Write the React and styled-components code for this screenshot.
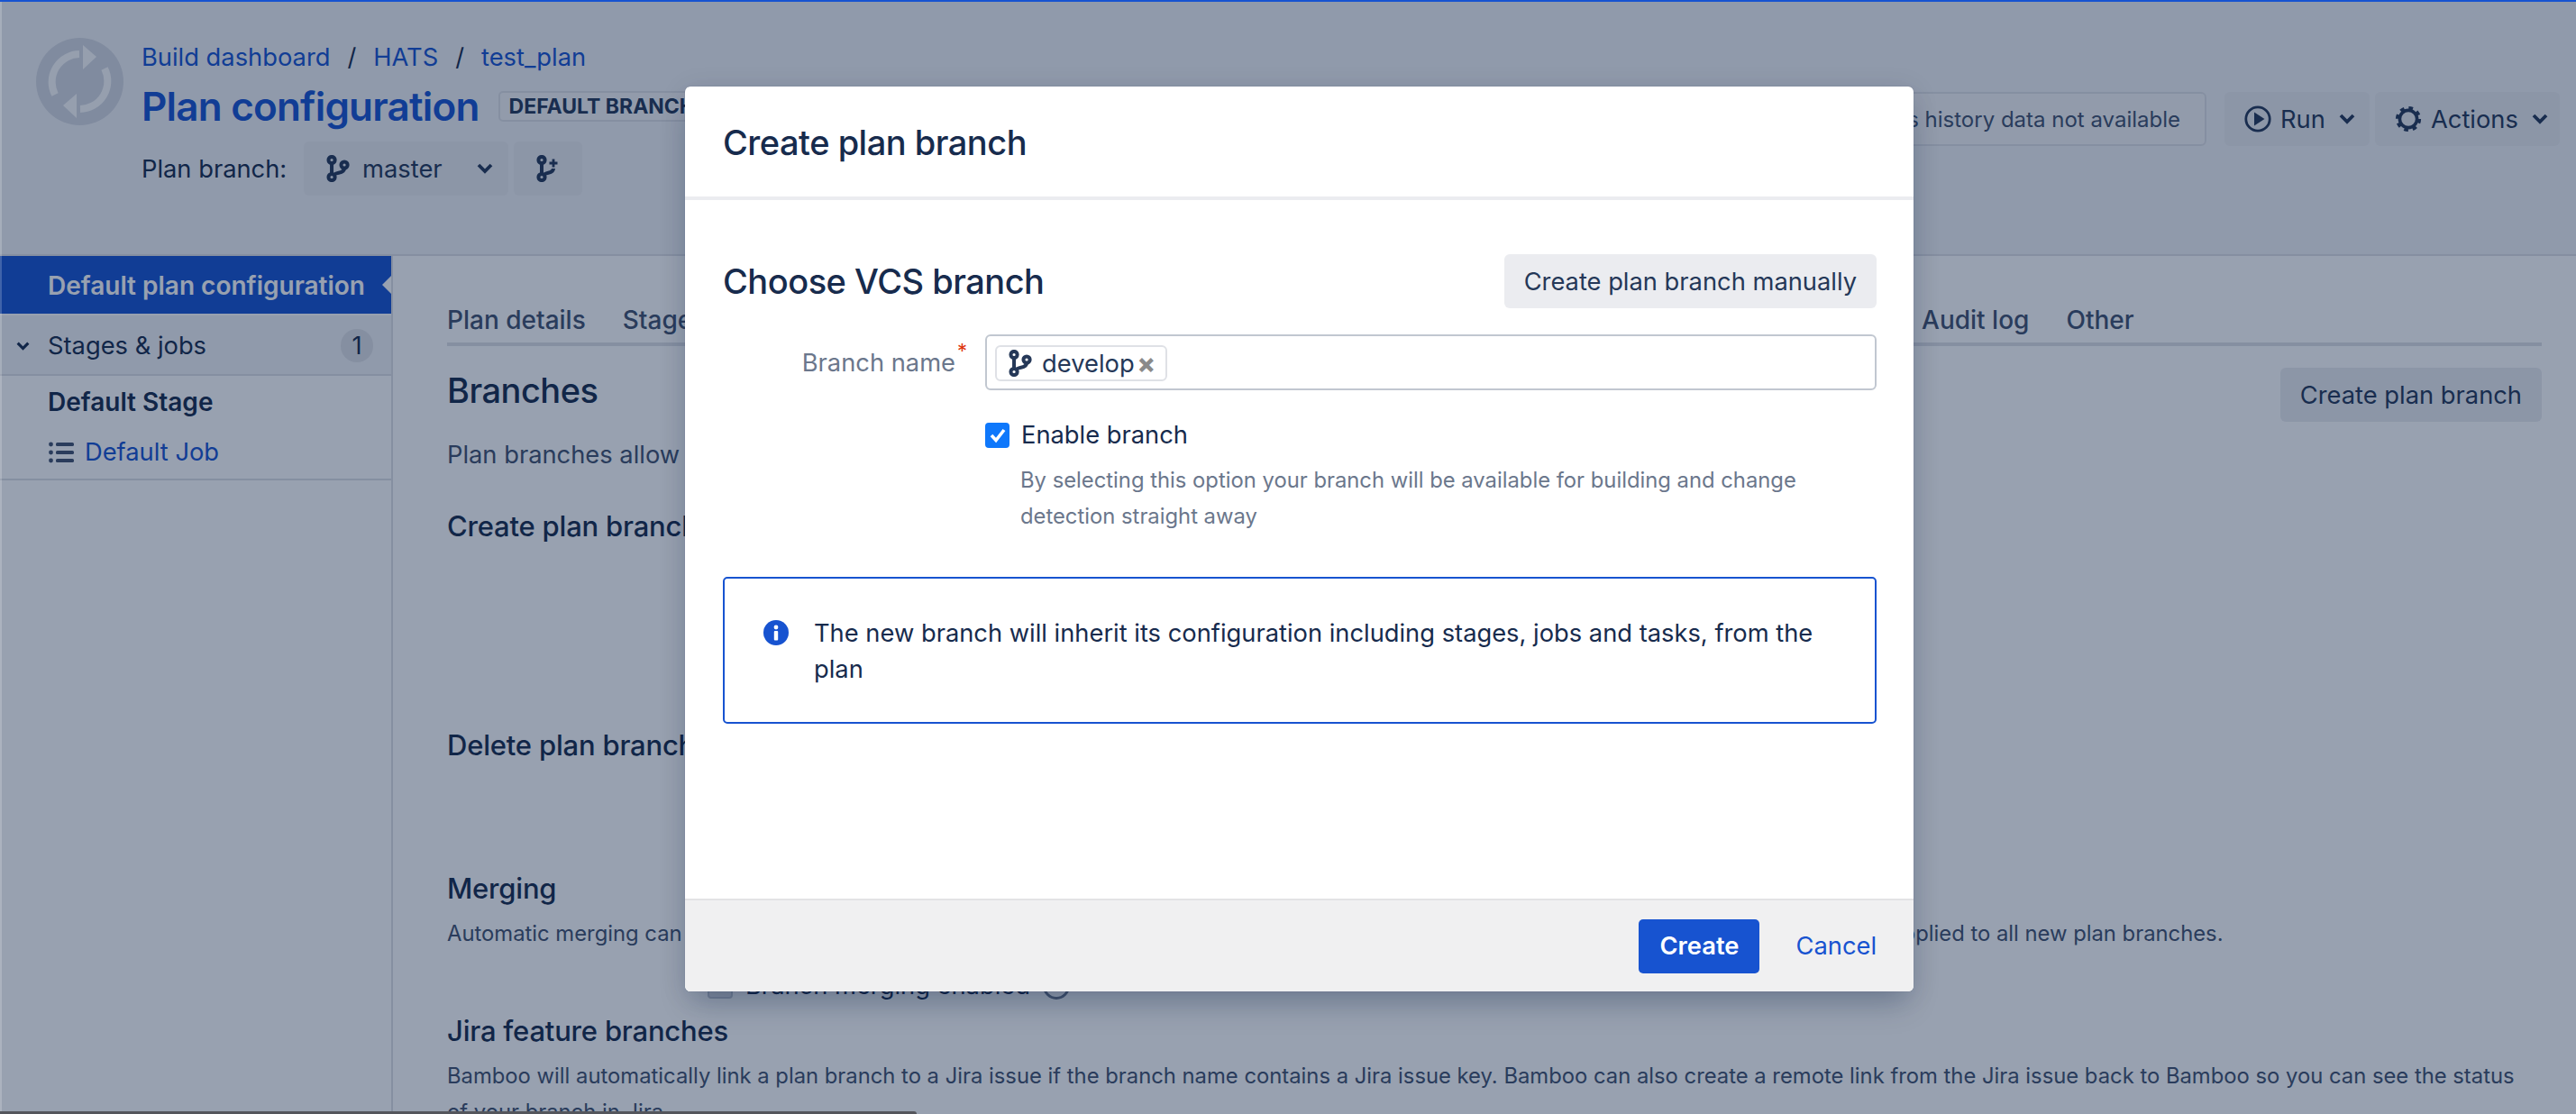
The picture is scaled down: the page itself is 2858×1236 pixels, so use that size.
import React from "react";
import styled, { createGlobalStyle } from "styled-components";

const Global = createGlobalStyle`
  html, body { margin: 0; padding: 0; background: #fff; }
  body { width: 2858px; height: 1236px; overflow: hidden; font-family: Inter, "Liberation Sans", sans-serif; font-size: 27.3px; color: #172b4d; }
  #root { width: 2858px; height: 1236px; }
  * { box-sizing: border-box; }
`;

const LINK = "#1753d0";

const Page = styled.div`
  position: relative;
  width: 2858px;
  height: 1236px;
  overflow: hidden;
  border-top: 2px solid ${LINK};
`;
const Header = styled.header`
  height: 282px;
  background: #f2f3f6;
  border-bottom: 2px solid #dfe1e6;
  display: flex;
  justify-content: space-between;
  padding: 40px 18px 0 40px;
`;
const HeaderLeft = styled.div`
  display: flex;
  gap: 20px;
`;
const Logo = styled.svg`
  width: 97px;
  height: 97px;
  flex: none;
`;
const TitleBlock = styled.div`
  display: flex;
  flex-direction: column;
`;
const Crumbs = styled.div`
  display: flex;
  align-items: center;
  height: 42px;
  gap: 19px;
`;
const Link = styled.a`
  color: ${LINK};
`;
const Slash = styled.span`
  color: #172b4d;
`;
const TitleRow = styled.div`
  display: flex;
  align-items: center;
  height: 56px;
  margin-top: 6px;
  gap: 21px;
`;
const PageTitle = styled.h1`
  margin: 0;
  font-size: 44px;
  line-height: 56px;
  font-weight: 600;
  color: ${LINK};
  letter-spacing: -0.8px;
`;
const Lozenge = styled.span`
  display: flex;
  align-items: center;
  height: 34px;
  padding: 0 10px;
  border: 2px solid #dfe1e6;
  border-radius: 5px;
  background: #f4f5f7;
  font-size: 23px;
  font-weight: 700;
  white-space: nowrap;
  color: #253858;
`;
const BranchRow = styled.div`
  display: flex;
  align-items: center;
  margin-top: 11px;
  gap: 6px;
`;
const BranchLabel = styled.span`
  width: 174px;
`;
const GreyButton = styled.button`
  display: flex;
  align-items: center;
  height: 60px;
  padding: ${(p) => p.$pad || "0 22px"};
  width: ${(p) => p.$w || "auto"};
  margin-left: ${(p) => p.$ml || "0"};
  border: 0;
  border-radius: 6px;
  background: #ebecf0;
  color: #253858;
  font: inherit;
  white-space: nowrap;
`;
const SelectValue = styled.span`
  flex: 1;
  text-align: left;
`;
const HeaderRight = styled.div`
  display: flex;
  align-items: center;
  height: 60px;
  margin-top: 60px;
`;
const HistoryNote = styled.div`
  display: flex;
  align-items: center;
  height: 60px;
  padding: 0 27px;
  margin-right: 20px;
  border: 2px solid #dfe1e6;
  border-radius: 6px;
  background: #f4f5f7;
  color: #42526e;
  font-size: 24px;
  white-space: nowrap;
`;
const Body = styled.div`
  display: flex;
  height: 952px;
`;
const Side = styled.aside`
  width: 436px;
  flex: none;
  border-right: 2px solid #dfe1e6;
`;
const SideActive = styled.div`
  position: relative;
  height: 64px;
  display: flex;
  align-items: center;
  padding: 2px 0 0 53px;
  background: ${LINK};
  color: #fff;
  font-size: 28px;
  font-weight: 600;
  &::after {
    content: "";
    position: absolute;
    right: 0;
    top: 22px;
    border-style: solid;
    border-width: 10px 10px 10px 0;
    border-color: transparent #fff transparent transparent;
  }
`;
const SideGroup = styled.div`
  height: 67px;
  margin-top: 2px;
  display: flex;
  align-items: center;
  padding: 2px 20px 0 18px;
  background: #f2f3f6;
  border-bottom: 2px solid #dfe1e6;
`;
const SideGroupLabel = styled.span`
  flex: 1;
  margin-left: 20px;
`;
const Count = styled.span`
  width: 36px;
  height: 37px;
  border-radius: 18px;
  background: #dfe1e6;
  display: flex;
  align-items: center;
  justify-content: center;
`;
const SideStage = styled.div`
  height: 58px;
  padding: 0 0 0 53px;
  display: flex;
  align-items: center;
  font-size: 28px;
  font-weight: 600;
`;
const SideJob = styled.div`
  height: 58px;
  padding-left: 54px;
  padding-bottom: 3px;
  display: flex;
  align-items: center;
  gap: 12px;
  color: ${LINK};
  border-bottom: 2px solid #dfe1e6;
`;
const Main = styled.main`
  flex: 1;
  padding: 0 38px 0 60px;
  min-width: 0;
`;
const Tabs = styled.nav`
  height: 100px;
  display: flex;
  align-items: flex-end;
  gap: 41px;
  padding-bottom: 8px;
  border-bottom: 4px solid #dfe1e6;
  color: #42526e;
  font-size: 28px;
  font-weight: 500;
  white-space: nowrap;
`;
const TitleLine = styled.div`
  display: flex;
  justify-content: space-between;
  margin-top: 24px;
`;
const Heading = styled.h2`
  margin: 0;
  font-size: 38px;
  line-height: 50px;
  font-weight: 500;
  letter-spacing: -0.5px;
  color: #172b4d;
`;
const Para = styled.p`
  margin: ${(p) => p.$m || "0"};
  max-width: 2305px;
  color: #42526e;
  font-size: ${(p) => p.$size || "27.3px"};
  line-height: 40px;
`;
const Section = styled.section`
  height: ${(p) => p.$h}px;
`;
const SubHeading = styled.h3`
  margin: 0;
  font-size: 31px;
  line-height: 40px;
  font-weight: 500;
  letter-spacing: -0.2px;
  color: #172b4d;
`;
const MergeToggle = styled.div`
  display: flex;
  align-items: center;
  gap: 14px;
  margin: 21px 0 0 289px;
`;
const EmptyCheck = styled.span`
  width: 28px;
  height: 28px;
  border: 2px solid #c1c7d0;
  border-radius: 4px;
  background: #dfe1e6;
`;
const HelpDot = styled.span`
  width: 30px;
  height: 30px;
  border-radius: 50%;
  border: 3px solid #6b778c;
`;
const Blanket = styled.div`
  position: absolute;
  inset: -2px 0 0 0;
  background: rgba(9, 30, 66, 0.42);
  box-shadow: inset 2px 0 0 rgba(255, 255, 255, 0.2);
`;
const StatusBar = styled.div`
  position: absolute;
  left: 0;
  bottom: 0;
  width: 1017px;
  height: 3px;
  background: #54565c;
  border-top-right-radius: 3px;
`;
const ModalShadow = styled.div`
  position: absolute;
  left: 760px;
  top: 94px;
  width: 1363px;
  height: 1004px;
  border-radius: 6px;
  box-shadow: 0 20px 32px -8px rgba(9, 30, 66, 0.25), 0 4px 30px rgba(9, 30, 66, 0.1), 0 0 1px rgba(9, 30, 66, 0.31);
`;
const Modal = styled.div`
  position: absolute;
  left: 760px;
  top: 94px;
  width: 1363px;
  height: 1004px;
  display: flex;
  flex-direction: column;
  background: #fff;
  border-radius: 6px;
  overflow: hidden;
`;
const ModalHead = styled.div`
  height: 126px;
  flex: none;
  display: flex;
  align-items: center;
  padding: 2px 42px 0;
  border-bottom: 4px solid #ebecf0;
`;
const ModalTitle = styled.h2`
  margin: 0;
  font-size: 38px;
  font-weight: 500;
  letter-spacing: -0.5px;
  color: #172b4d;
`;
const ModalBody = styled.div`
  flex: 1;
  padding: 60px 41px 0 42px;
`;
const ChooseRow = styled.div`
  display: flex;
  align-items: center;
  justify-content: space-between;
  height: 60px;
`;
const FieldRow = styled.div`
  display: flex;
  margin-top: 29px;
`;
const FieldLabel = styled.label`
  width: 291px;
  flex: none;
  display: flex;
  justify-content: flex-end;
  align-items: center;
  padding-right: 31px;
  height: 62px;
  color: #6b778c;
`;
const Required = styled.span`
  position: relative;
  top: -13px;
  width: 0;
  color: #de350b;
  font-size: 22px;
  margin-left: 2px;
`;
const TagInput = styled.div`
  flex: 1;
  height: 62px;
  padding: 10px 10px 10px 9px;
  border: 2px solid #c1c7d0;
  border-radius: 6px;
`;
const Tag = styled.span`
  display: inline-flex;
  align-items: center;
  height: 40px;
  padding: 0 11px 0 13px;
  border: 2px solid #dfe1e6;
  border-radius: 6px;
  background: #fff;
  color: #253858;
`;
const TagClose = styled.span`
  margin-left: 3px;
  color: #8a8a8a;
  font-size: 30px;
  line-height: 30px;
  font-weight: 800;
`;
const CheckRow = styled.div`
  display: flex;
  align-items: center;
  gap: 13px;
  margin: 33px 0 0 291px;
`;
const CheckBox = styled.span`
  width: 27px;
  height: 28px;
  border-radius: 4px;
  background: #0f78fb;
  display: flex;
  align-items: center;
  justify-content: center;
`;
const Hint = styled.p`
  margin: 14px 0 0 330px;
  width: 880px;
  color: #6b778c;
  font-size: 23.8px;
  line-height: 40px;
`;
const InfoBox = styled.div`
  display: flex;
  height: 163px;
  margin-top: 47px;
  padding: 41px 34px 0 42px;
  gap: 27px;
  border: 2px solid ${LINK};
  border-radius: 5px;
  line-height: 40px;
  color: #172b4d;
`;
const InfoIcon = styled.svg`
  width: 30px;
  height: 30px;
  flex: none;
  margin-top: 4px;
`;
const ModalFoot = styled.div`
  height: 103px;
  flex: none;
  display: flex;
  align-items: center;
  justify-content: flex-end;
  gap: 40px;
  padding: 0 41px 0 0;
  background: #f0f0f1;
  border-top: 2px solid #e3e3e5;
`;
const Primary = styled.button`
  width: 134px;
  height: 60px;
  border: 0;
  border-radius: 5px;
  background: ${LINK};
  color: #fff;
  font: inherit;
  font-weight: 600;
`;
const CancelLink = styled.a`
  color: ${LINK};
  font-weight: 400;
`;
const IconBox = styled.svg`
  flex: none;
  margin: ${(p) => p.$m || "0"};
`;

const BranchIcon = ({ size = 30, m }) => (
  <IconBox $m={m} width={size * 0.87} height={size} viewBox="0 0 26 30" fill="none" stroke="currentColor" strokeWidth="4">
    <circle cx="6" cy="5.5" r="3.6" />
    <circle cx="6" cy="24.5" r="3.6" />
    <circle cx="20" cy="11" r="3.6" />
    <path d="M6 9.5V20.5" />
    <path d="M20 15c0 6-10 3.5-11 7" />
  </IconBox>
);
const BranchPlusIcon = () => (
  <IconBox width="28" height="30" viewBox="0 0 28 30" fill="none" stroke="currentColor" strokeWidth="4">
    <circle cx="7" cy="5.5" r="3.6" />
    <circle cx="7" cy="24.5" r="3.6" />
    <path d="M7 9.5V20.5" />
    <path d="M20 15c0 6-9 3.5-10 7" />
    <path d="M20 4.5v9M15.5 9h9" strokeWidth="2.8" />
  </IconBox>
);
const Chevron = ({ m, w = 18 }) => (
  <IconBox $m={m} width={w} height={(w * 2) / 3} viewBox="0 0 18 12" fill="none" stroke="currentColor" strokeWidth="3.8">
    <path d="M2 2l7 7 7-7" />
  </IconBox>
);
const PlayIcon = () => (
  <IconBox $m="0 10px 0 0" width="30" height="30" viewBox="0 0 30 30" fill="none">
    <circle cx="15" cy="15" r="13.2" stroke="currentColor" strokeWidth="2.8" />
    <path d="M11 7.5v15L22.5 15z" fill="currentColor" />
  </IconBox>
);
const GearIcon = () => (
  <IconBox $m="0 10px 0 0" width="30" height="30" viewBox="0 0 30 30" fill="none" stroke="currentColor">
    <circle cx="15" cy="15" r="9.6" strokeWidth="3.6" />
    <circle cx="15" cy="15" r="12.4" strokeWidth="3.4" strokeDasharray="4.7 5.04" />
  </IconBox>
);
const ListIcon = () => (
  <IconBox width="28" height="24" viewBox="0 0 28 24" fill="#42526e">
    <circle cx="2.5" cy="3" r="2.4" />
    <circle cx="2.5" cy="12" r="2.4" />
    <circle cx="2.5" cy="21" r="2.4" />
    <rect x="8" y="1" width="20" height="4" rx="1.6" />
    <rect x="8" y="10" width="20" height="4" rx="1.6" />
    <rect x="8" y="19" width="20" height="4" rx="1.6" />
  </IconBox>
);

export default function App() {
  return (
    <>
      <Global />
      <Page>
        <Header>
          <HeaderLeft>
            <Logo viewBox="0 0 97 97">
              <circle cx="48.5" cy="48.5" r="48.5" fill="#d6dae2" />
              <g fill="none" stroke="#fbfbfc" strokeWidth="8">
                <path d="M21 63A31 31 0 0 1 48 18" />
                <path d="M76 34A31 31 0 0 1 49 79" />
              </g>
              <path d="M52 8L67 21 52 35z" fill="#fbfbfc" />
              <path d="M45 62L30 75 45 89z" fill="#fbfbfc" />
            </Logo>
            <TitleBlock>
              <Crumbs>
                <Link>Build dashboard</Link>
                <Slash>/</Slash>
                <Link>HATS</Link>
                <Slash>/</Slash>
                <Link>test_plan</Link>
              </Crumbs>
              <TitleRow>
                <PageTitle>Plan configuration</PageTitle>
                <Lozenge>DEFAULT BRANCH</Lozenge>
              </TitleRow>
              <BranchRow>
                <BranchLabel>Plan branch:</BranchLabel>
                <GreyButton $w="227px" $pad="0 17px 0 25px">
                  <BranchIcon m="0 14px 0 0" />
                  <SelectValue>master</SelectValue>
                  <Chevron />
                </GreyButton>
                <GreyButton $w="76px" $pad="0 24px">
                  <BranchPlusIcon />
                </GreyButton>
              </BranchRow>
            </TitleBlock>
          </HeaderLeft>
          <HeaderRight>
            <HistoryNote>Branch status history data not available</HistoryNote>
            <GreyButton $w="161px">
              <PlayIcon />
              Run
              <Chevron m="0 0 0 15px" />
            </GreyButton>
            <GreyButton $w="205px" $ml="6px">
              <GearIcon />
              Actions
              <Chevron m="0 0 0 15px" />
            </GreyButton>
          </HeaderRight>
        </Header>
        <Body>
          <Side>
            <SideActive>Default plan configuration</SideActive>
            <SideGroup>
              <Chevron w={15} />
              <SideGroupLabel>Stages &amp; jobs</SideGroupLabel>
              <Count>1</Count>
            </SideGroup>
            <SideStage>Default Stage</SideStage>
            <SideJob>
              <ListIcon />
              Default Job
            </SideJob>
          </Side>
          <Main>
            <Tabs>
              <span>Plan details</span>
              <span>Stages</span>
              <span>Repositories</span>
              <span>Triggers</span>
              <span>Branches</span>
              <span>Dependencies</span>
              <span>Permissions</span>
              <span>Notifications</span>
              <span>Values</span>
              <span>Audit log</span>
              <span>Other</span>
            </Tabs>
            <TitleLine>
              <Heading>Branches</Heading>
              <GreyButton>Create plan branch</GreyButton>
            </TitleLine>
            <Para $m="17px 0 39px">Plan branches allow you to run builds against other branches in your repository.</Para>
            <Section $h={243}>
              <SubHeading>Create plan branches</SubHeading>
            </Section>
            <Section $h={159}>
              <SubHeading>Delete plan branches</SubHeading>
            </Section>
            <Section $h={158}>
              <SubHeading>Merging</SubHeading>
              <Para $size="23.8px" $m="10px 0 0">
                Automatic merging can be configured to keep your plan branches up to date with the default branch. The merging strategy you choose will be applied to all new plan branches.
              </Para>
              <MergeToggle>
                <EmptyCheck />
                <span>Branch merging enabled</span>
                <HelpDot />
              </MergeToggle>
            </Section>
            <Section $h={120}>
              <SubHeading>Jira feature branches</SubHeading>
              <Para $size="23.8px" $m="10px 0 0">
                Bamboo will automatically link a plan branch to a Jira issue if the branch name contains a Jira issue key. Bamboo can also create a remote link from the Jira issue back to Bamboo so you can see the status of your branch in Jira.
              </Para>
            </Section>
          </Main>
        </Body>
        <Blanket />
        <StatusBar />
        <ModalShadow />
        <Modal>
          <ModalHead>
            <ModalTitle>Create plan branch</ModalTitle>
          </ModalHead>
          <ModalBody>
            <ChooseRow>
              <ModalTitle>Choose VCS branch</ModalTitle>
              <GreyButton>Create plan branch manually</GreyButton>
            </ChooseRow>
            <FieldRow>
              <FieldLabel>
                Branch name
                <Required>*</Required>
              </FieldLabel>
              <TagInput>
                <Tag>
                  <BranchIcon m="0 11px 0 0" />
                  develop
                  <TagClose>×</TagClose>
                </Tag>
              </TagInput>
            </FieldRow>
            <CheckRow>
              <CheckBox>
                <svg width="20" height="18" viewBox="0 0 20 18" fill="none" stroke="#fff" strokeWidth="3.6">
                  <path d="M3 9l5 5.5L17 3" />
                </svg>
              </CheckBox>
              <span>Enable branch</span>
            </CheckRow>
            <Hint>By selecting this option your branch will be available for building and change detection straight away</Hint>
            <InfoBox>
              <InfoIcon viewBox="0 0 30 30">
                <circle cx="15" cy="15" r="14" fill={LINK} />
                <circle cx="15" cy="9" r="2.4" fill="#fff" />
                <rect x="12.8" y="13" width="4.4" height="10.5" rx="1" fill="#fff" />
              </InfoIcon>
              <span>The new branch will inherit its configuration including stages, jobs and tasks, from the plan</span>
            </InfoBox>
          </ModalBody>
          <ModalFoot>
            <Primary>Create</Primary>
            <CancelLink>Cancel</CancelLink>
          </ModalFoot>
        </Modal>
      </Page>
    </>
  );
}
